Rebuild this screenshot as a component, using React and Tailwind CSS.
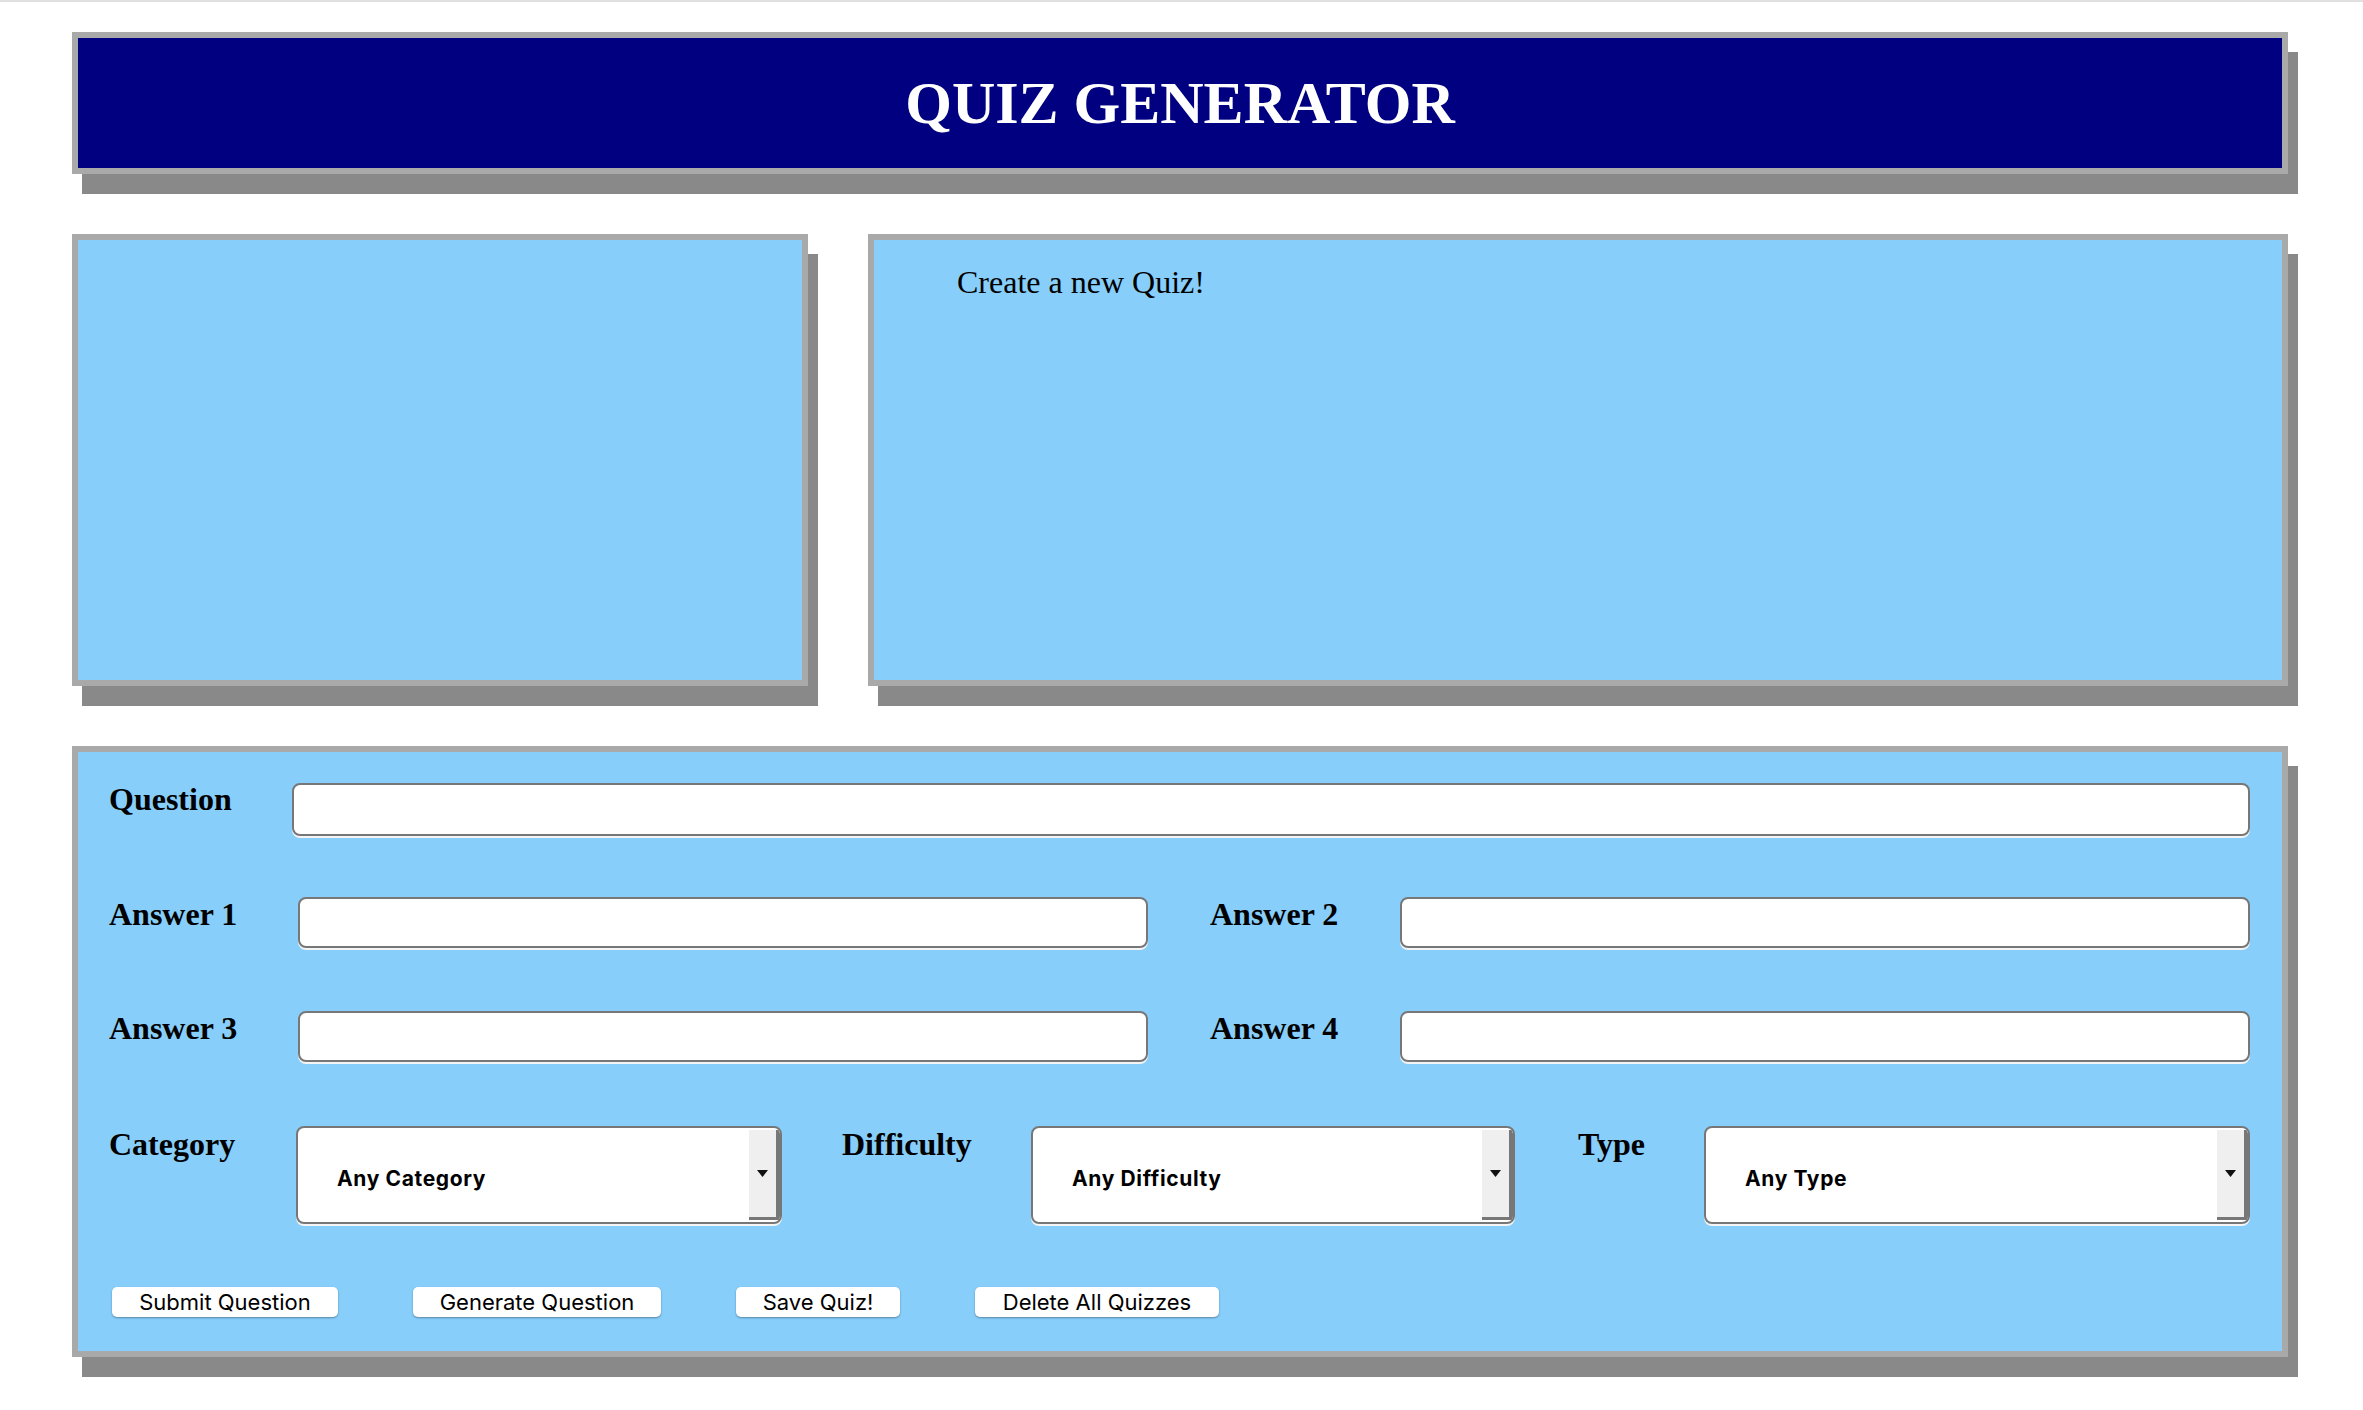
import React, { useState } from "react";

const LABEL_CLASS =
  "shrink-0 font-bold text-[32px] leading-none text-black [font-family:'Liberation_Serif',serif]";
const INPUT_CLASS =
  "h-[51px] rounded-[8px] border-2 border-[#777] bg-white px-3 text-[20px] outline-none shadow-[0_2px_0_#f4f4f4]";

const CATEGORIES = ["Any Category", "General Knowledge", "Science", "History"];
const DIFFICULTIES = ["Any Difficulty", "Easy", "Medium", "Hard"];
const TYPES = ["Any Type", "Multiple Choice", "True / False"];

function FakeSelect({ options, value, onChange, className }) {
  return (
    <div
      className={`flex h-[98px] overflow-hidden rounded-[8px] border-2 border-[#777] bg-white shadow-[0_2px_0_#f4f4f4] ${className}`}
    >
      <select
        value={value}
        onChange={(e) => onChange(e.target.value)}
        className="min-w-0 flex-1 appearance-none bg-transparent pl-[39px] pt-[7px] text-[21px] font-bold tracking-[0.03em] text-black outline-none [font-family:Inter,sans-serif]"
      >
        {options.map((o) => (
          <option key={o}>{o}</option>
        ))}
      </select>
      {/* dropdown arrow segment */}
      <div className="my-[2px] flex w-[31px] shrink-0 items-center justify-center border-r-[4px] border-b-[3px] border-[#777] bg-[#efefef]">
        <svg width="11" height="7" viewBox="0 0 11 7">
          <path d="M0 0h11L5.5 7z" fill="#111" />
        </svg>
      </div>
    </div>
  );
}

export default function App() {
  const [question, setQuestion] = useState("");
  const [answers, setAnswers] = useState(["", "", "", ""]);
  const [category, setCategory] = useState(CATEGORIES[0]);
  const [difficulty, setDifficulty] = useState(DIFFICULTIES[0]);
  const [type, setType] = useState(TYPES[0]);

  const setAnswer = (i, v) => {
    const next = [...answers];
    next[i] = v;
    setAnswers(next);
  };

  const buttons = [
    { label: "Submit Question", w: "w-[226px]" },
    { label: "Generate Question", w: "w-[248px]" },
    { label: "Save Quiz!", w: "w-[164px]" },
    { label: "Delete All Quizzes", w: "w-[244px]" },
  ];

  return (
    <div className="min-h-screen bg-white">
      <div className="h-[2px] bg-[#e0e0e0]"></div>

      <div className="ml-[72px] w-[2216px] pt-[30px]">
        {/* Header */}
        <div className="flex h-[142px] items-center justify-center border-[6px] border-[#a9a9a9] bg-[#000080] shadow-[10px_20px_0_#898989]">
          <h1 className="text-[60px] font-bold leading-none text-white [font-family:'Liberation_Serif',serif]">
            QUIZ GENERATOR
          </h1>
        </div>

        {/* Panels */}
        <div className="mt-[60px] flex h-[452px] gap-[60px]">
          <div className="w-[736px] shrink-0 border-[6px] border-[#a9a9a9] bg-[#87cefa] shadow-[10px_20px_0_#898989]"></div>
          <div className="flex-1 border-[6px] border-[#a9a9a9] bg-[#87cefa] pl-[83px] pt-[26px] shadow-[10px_20px_0_#898989]">
            <p className="text-[32px] leading-none text-black [font-family:'Liberation_Serif',serif]">
              Create a new Quiz!
            </p>
          </div>
        </div>

        {/* Form */}
        <div className="mt-[60px] h-[611px] border-[6px] border-[#a9a9a9] bg-[#87cefa] pl-[31px] pr-[32px] pt-[31px] shadow-[10px_20px_0_#898989]">
          <div className="flex items-start">
            <label className={`${LABEL_CLASS} w-[183px]`}>Question</label>
            <input
              value={question}
              onChange={(e) => setQuestion(e.target.value)}
              className={`${INPUT_CLASS} h-[53px] flex-1`}
            />
          </div>

          {[0, 2].map((i, row) => (
            <div
              key={i}
              className={`flex items-start ${row === 0 ? "mt-[61px]" : "mt-[63px]"}`}
            >
              <label className={`${LABEL_CLASS} w-[189px] pt-[1px]`}>Answer {i + 1}</label>
              <input
                value={answers[i]}
                onChange={(e) => setAnswer(i, e.target.value)}
                className={`${INPUT_CLASS} w-[850px]`}
              />
              <label className={`${LABEL_CLASS} ml-[62px] w-[190px] pt-[1px]`}>
                Answer {i + 2}
              </label>
              <input
                value={answers[i + 1]}
                onChange={(e) => setAnswer(i + 1, e.target.value)}
                className={`${INPUT_CLASS} flex-1`}
              />
            </div>
          ))}

          {/* Selects */}
          <div className="mt-[64px] flex items-start">
            <label className={`${LABEL_CLASS} w-[187px] pt-[2px]`}>Category</label>
            <FakeSelect
              options={CATEGORIES}
              value={category}
              onChange={setCategory}
              className="w-[486px]"
            />
            <label className={`${LABEL_CLASS} ml-[60px] w-[189px] pt-[2px]`}>Difficulty</label>
            <FakeSelect
              options={DIFFICULTIES}
              value={difficulty}
              onChange={setDifficulty}
              className="w-[484px]"
            />
            <label className={`${LABEL_CLASS} ml-[63px] w-[126px] pt-[2px]`}>Type</label>
            <FakeSelect options={TYPES} value={type} onChange={setType} className="flex-1" />
          </div>

          {/* Buttons */}
          <div className="ml-[3px] mt-[63px] flex gap-[75px]">
            {buttons.map((b) => (
              <button
                key={b.label}
                className={`h-[30px] ${b.w} rounded-[5px] bg-white text-[22px] leading-none text-black shadow-[0_1px_2px_rgba(0,0,0,0.35)] [font-family:Inter,sans-serif]`}
              >
                {b.label}
              </button>
            ))}
          </div>
        </div>
      </div>
    </div>
  );
}
